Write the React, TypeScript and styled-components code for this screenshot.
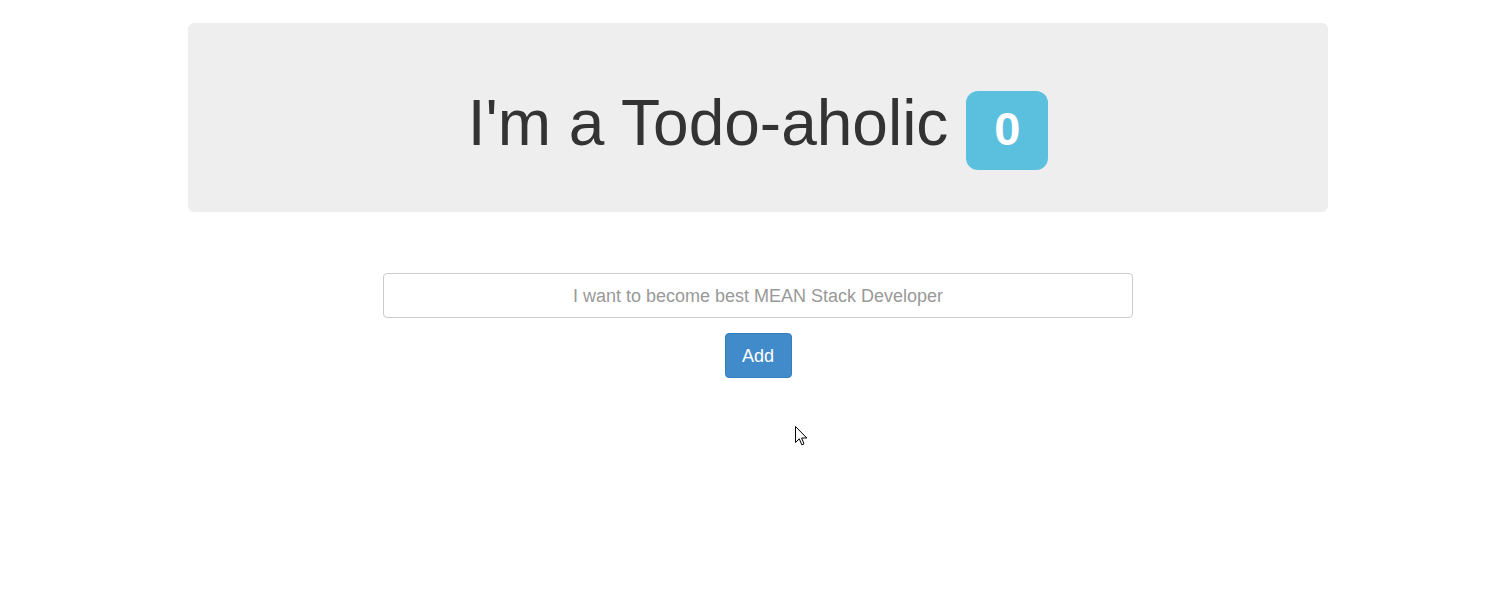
import styled, { createGlobalStyle } from 'styled-components';

const GlobalStyle = createGlobalStyle`
  html, body {
    margin: 0;
    padding: 0;
    background: #ffffff;
  }
  body {
    font-family: "Liberation Sans", Arial, Helvetica, sans-serif;
    color: #333333;
    font-size: 14px;
  }
`;

const Page = styled.div`
  position: relative;
  width: 1487px;
  height: 603px;
  overflow: hidden;
`;

const Container = styled.div`
  width: 1140px;
  margin: 0 0 0 188px;
  padding-top: 23px;
`;

const Jumbotron = styled.header`
  box-sizing: border-box;
  height: 189px;
  padding-top: 22px;
  background: #eeeeee;
  border-radius: 6px;
  display: flex;
  align-items: center;
  justify-content: center;
`;

const Heading = styled.h1`
  margin: 0;
  font-size: 64px;
  font-weight: 400;
  line-height: 1.1;
  color: #333333;
  text-align: center;
`;

const Counter = styled.span`
  display: inline-block;
  padding: 14px 28px 18px;
  font-size: 47px;
  line-height: 47px;
  font-weight: 700;
  color: #ffffff;
  background: #5bc0de;
  border-radius: 12px;
`;

const TodoForm = styled.form`
  width: 750px;
  margin: 61px auto 0;
  display: flex;
  flex-direction: column;
  align-items: center;
  gap: 15px;
`;

const TodoInput = styled.input`
  box-sizing: border-box;
  width: 100%;
  height: 45px;
  padding: 11px 16px 9px;
  font-family: inherit;
  font-size: 18px;
  color: #555555;
  text-align: center;
  border: 1px solid #cccccc;
  border-radius: 4px;
  outline: none;

  &::placeholder {
    color: #999999;
  }
`;

const AddButton = styled.button`
  box-sizing: border-box;
  width: 67px;
  height: 45px;
  padding: 1px 0 0;
  font-family: inherit;
  font-size: 18px;
  color: #ffffff;
  background: #428bca;
  border: 1px solid #357ebd;
  border-radius: 4px;
  cursor: pointer;
`;

const Pointer = styled.svg`
  position: absolute;
  left: 795px;
  top: 426px;
`;

export default function App() {
  return (
    <Page>
      <GlobalStyle />
      <Container>
        <Jumbotron>
          <Heading>
            I'm a Todo-aholic <Counter>0</Counter>
          </Heading>
        </Jumbotron>
        <TodoForm onSubmit={e => e.preventDefault()}>
          <TodoInput placeholder="I want to become best MEAN Stack Developer" />
          <AddButton type="submit">Add</AddButton>
        </TodoForm>
      </Container>
      <Pointer width="14" height="21" viewBox="0 0 14 21">
        <path
          d="M0.5 0.5 L0.5 16.5 L4.3 12.8 L6.8 18.8 L9 17.9 L6.6 12 L11.8 12 Z"
          fill="#ffffff"
          stroke="#000000"
          strokeWidth="1"
          strokeLinejoin="miter"
        />
      </Pointer>
    </Page>
  );
}
